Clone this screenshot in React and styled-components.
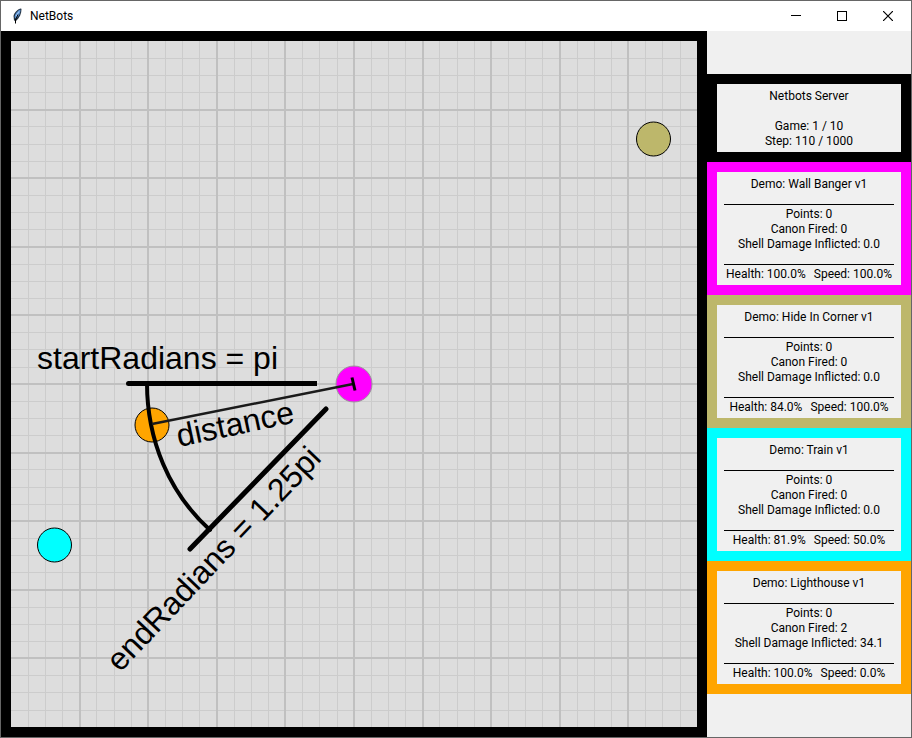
import React from "react";
import styled, { createGlobalStyle } from "styled-components";

const GlobalStyle = createGlobalStyle`
  *, *::before, *::after { box-sizing: border-box; }
  body { margin: 0; background: #666; }
`;

const Window = styled.main`
  display: flex;
  flex-direction: column;
  min-height: 100vh;
  border: 1px solid #666;
  background: #f0f0f0;
  color: #000;
  font-family: Roboto, "Open Sans", sans-serif;
  font-size: 12px;
  line-height: 15px;
`;

const TitleBar = styled.header`
  display: flex;
  align-items: center;
  height: 30px;
  padding-left: 8px;
  background: #fff;
`;

const Title = styled.h1`
  flex: 1;
  margin: 0;
  padding-left: 5px;
  font-size: 12px;
  font-weight: 400;
`;

const WindowButton = styled.button`
  display: flex;
  align-items: center;
  justify-content: center;
  width: 46px;
  height: 30px;
  padding: 0;
  border: 0;
  background: transparent;
  color: #000;
`;

const Content = styled.div`
  display: flex;
  flex: 1;
`;

const Arena = styled.section`
  flex: 1;
  min-width: 0;
  padding: 10px;
  background: #000;
`;

const Board = styled.svg`
  display: block;
  width: 100%;
  height: auto;
`;

const Label = styled.text`
  font-family: "Liberation Sans", Arial, sans-serif;
  font-size: 32px;
  fill: #000;
`;

const Sidebar = styled.aside`
  display: flex;
  flex-direction: column;
  justify-content: center;
  flex: 0 0 204px;
  min-width: 0;
`;

const Panel = styled.section`
  padding: 5px 7px 3px;
  border: 10px solid ${(p) => p.$color};
  text-align: center;
  white-space: nowrap;
`;

const PanelTitle = styled.h2`
  margin: 0;
  font-size: inherit;
  font-weight: 400;
`;

const Line = styled.p`
  margin: 0;
`;

const Spacer = styled.div`
  height: 15px;
`;

const Rule = styled.hr`
  height: 13px;
  margin: 0 0 2px;
  border: 0;
  border-bottom: 1px solid #000;
`;

const Status = styled.div`
  display: flex;
  justify-content: center;
  gap: 8px;
`;

const SIZE = 686;
const CELL = SIZE / 40;

const BOTS = [
  { name: "Wall Banger", color: "#ff00ff", fired: 0, damage: "0.0", health: "100.0", speed: "100.0" },
  { name: "Hide In Corner", color: "#bdb76b", fired: 0, damage: "0.0", health: "84.0", speed: "100.0", x: 642.5, y: 98 },
  { name: "Train", color: "#00ffff", fired: 0, damage: "0.0", health: "81.9", speed: "50.0", x: 43.5, y: 504 },
  { name: "Lighthouse", color: "#ffa500", fired: 2, damage: "34.1", health: "100.0", speed: "0.0", x: 141, y: 384 },
];

const STEPS = Array.from({ length: 39 }, (_, i) => i + 1);

function Grid() {
  const minor = STEPS.filter((n) => n % 4 !== 0).map((n) => Math.floor(n * CELL + 0.2));
  const major = STEPS.filter((n) => n % 4 === 0).map((n) => Math.round(n * CELL) - 1);
  const bars = (list, size, fill) =>
    list.map((v) => (
      <g key={v} fill={fill}>
        <rect x={v} y="0" width={size} height={SIZE} />
        <rect x="0" y={v} width={SIZE} height={size} />
      </g>
    ));
  return (
    <g shapeRendering="crispEdges">
      <rect width={SIZE} height={SIZE} fill="#ddd" />
      {bars(minor, 1, "#ccc")}
      {bars(major, 2, "#c0c0c0")}
    </g>
  );
}

function Feather() {
  return (
    <svg width="16" height="16" viewBox="0 0 16 16" aria-hidden="true">
      <path d="M12 .5C9 1 5.500 4 4.500 8L5 12.500l2 .5C10.500 10 12.500 6 12.500 1z" fill="#22303f" />
      <path d="M11 1.500C8.500 3 6 5.500 5.500 9L7 11C9.500 8.500 11.500 5.500 11.500 2z" fill="#5b93d6" />
      <path d="M10 3.500 7 8" stroke="#a9cbf2" fill="none" />
      <path d="M9 6.500 6.500 12v3.500" stroke="#000" fill="none" />
    </svg>
  );
}

function ScanDiagram() {
  return (
    <g stroke="#000" fill="none">
      <path d="M117 342.500H306" strokeWidth="5" />
      <circle cx="117.500" cy="342.500" r="2.500" fill="#000" stroke="none" />
      <path d="M179 508 315 368" strokeWidth="5" strokeLinecap="round" />
      <path d="M136 342C136 399 158 452 199 489" strokeWidth="4" strokeLinecap="round" />
      <path d="M141 383 342 343" strokeWidth="2.500" stroke="#1a1a1a" />
      <path d="M341 336.500 344 349.500" strokeWidth="3" />
    </g>
  );
}

export default function App() {
  return (
    <Window>
      <GlobalStyle />
      <TitleBar>
        <Feather />
        <Title>NetBots</Title>
        <WindowButton aria-label="Minimize">
          <svg width="10" height="10" shapeRendering="crispEdges"><path d="M0 4.500H10" stroke="#000" /></svg>
        </WindowButton>
        <WindowButton aria-label="Maximize">
          <svg width="10" height="10" shapeRendering="crispEdges"><path d="M.5.5h9v9h-9z" stroke="#000" fill="none" /></svg>
        </WindowButton>
        <WindowButton aria-label="Close">
          <svg width="10" height="10"><path d="M0 0 10 10M10 0 0 10" stroke="#000" strokeWidth="1.200" /></svg>
        </WindowButton>
      </TitleBar>
      <Content>
        <Arena>
          <Board viewBox={`0 0 ${SIZE} ${SIZE}`} role="img" aria-label="Arena">
            <Grid />
            {BOTS.filter((b) => b.x).map((b) => (
              <circle key={b.name} cx={b.x} cy={b.y} r="17" fill={b.color} stroke="#000" />
            ))}
            <circle cx="343" cy="343" r="18" fill="#ff00ff" stroke="#999" />
            <ScanDiagram />
            <Label x="26" y="328">startRadians = pi</Label>
            <Label transform="translate(168 406) rotate(-12)">distance</Label>
            <Label transform="translate(109 632) rotate(-46.500)">endRadians = 1.25pi</Label>
          </Board>
        </Arena>
        <Sidebar>
          <Panel $color="#000">
            <PanelTitle>Netbots Server</PanelTitle>
            <Spacer />
            <Line>Game: 1 / 10</Line>
            <Line>Step: 110 / 1000</Line>
          </Panel>
          {BOTS.map((b) => (
            <Panel key={b.name} $color={b.color}>
              <PanelTitle>{`Demo: ${b.name} v1`}</PanelTitle>
              <Rule />
              <Line>Points: 0</Line>
              <Line>{`Canon Fired: ${b.fired}`}</Line>
              <Line>{`Shell Damage Inflicted: ${b.damage}`}</Line>
              <Rule />
              <Status>
                <span>{`Health: ${b.health}%`}</span>
                <span>{`Speed: ${b.speed}%`}</span>
              </Status>
            </Panel>
          ))}
        </Sidebar>
      </Content>
    </Window>
  );
}
